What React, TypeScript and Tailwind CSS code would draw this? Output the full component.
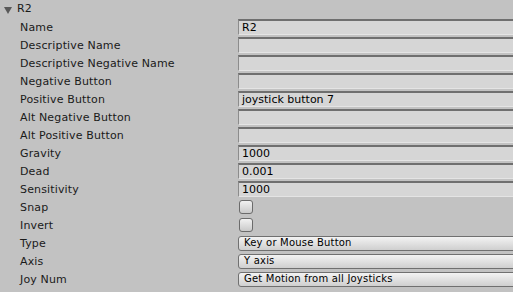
import React from "react";

type Row = {
  label: string;
  kind: "text" | "check" | "popup";
  value?: string;
};

const rows: Row[] = [
  { label: "Name", kind: "text", value: "R2" },
  { label: "Descriptive Name", kind: "text", value: "" },
  { label: "Descriptive Negative Name", kind: "text", value: "" },
  { label: "Negative Button", kind: "text", value: "" },
  { label: "Positive Button", kind: "text", value: "joystick button 7" },
  { label: "Alt Negative Button", kind: "text", value: "" },
  { label: "Alt Positive Button", kind: "text", value: "" },
  { label: "Gravity", kind: "text", value: "1000" },
  { label: "Dead", kind: "text", value: "0.001" },
  { label: "Sensitivity", kind: "text", value: "1000" },
  { label: "Snap", kind: "check" },
  { label: "Invert", kind: "check" },
  { label: "Type", kind: "popup", value: "Key or Mouse Button" },
  { label: "Axis", kind: "popup", value: "Y axis" },
  { label: "Joy Num", kind: "popup", value: "Get Motion from all Joysticks" },
];

function Control({ row }: { row: Row }) {
  if (row.kind === "text") {
    return (
      <div className="h-[16px] flex-1 mr-[-6px] bg-[#d6d6d6] border-t-2 border-t-[#6f6f6f] border-l border-l-[#8c8c8c] border-b border-b-[#e4e4e4] flex items-center pl-[3px] text-[11px] leading-none text-black">
        {row.value}
      </div>
    );
  }
  if (row.kind === "check") {
    return (
      <div className="ml-[1px] w-[14px] h-[14px] rounded-[3px] border border-[#6b6b6b] bg-gradient-to-b from-[#f2f2f2] to-[#c9c9c9]" />
    );
  }
  return (
    <div className="h-[15px] flex-1 mr-[-6px] rounded-l-[3px] border border-[#707070] bg-gradient-to-b from-[#f3f3f3] to-[#cfcfcf] flex items-center pl-[5px] text-[10px] leading-none text-black tracking-[0.2px]">
      {row.value}
    </div>
  );
}

export default function App() {
  return (
    <div
      className="w-[513px] h-[292px] overflow-hidden bg-[#c2c2c2] text-[#1a1a1a]"
      style={{ fontFamily: '"DejaVu Sans", sans-serif' }}
    >
      <div className="h-[18px] flex items-center pl-[4px] pt-[1px] text-[11px]">
        <svg width="9" height="8" viewBox="0 0 9 8" className="mr-[4px]">
          <polygon points="0,1 8,1 4,8" fill="#595959" />
        </svg>
        <span>R2</span>
      </div>
      <div className="flex flex-col">
        {rows.map((r, i) => (
          <div key={i} className="h-[18px] flex items-center">
            <div className="w-[238px] pl-[20px] text-[11px] leading-none tracking-[0.15px]">
              {r.label}
            </div>
            <Control row={r} />
          </div>
        ))}
      </div>
    </div>
  );
}
